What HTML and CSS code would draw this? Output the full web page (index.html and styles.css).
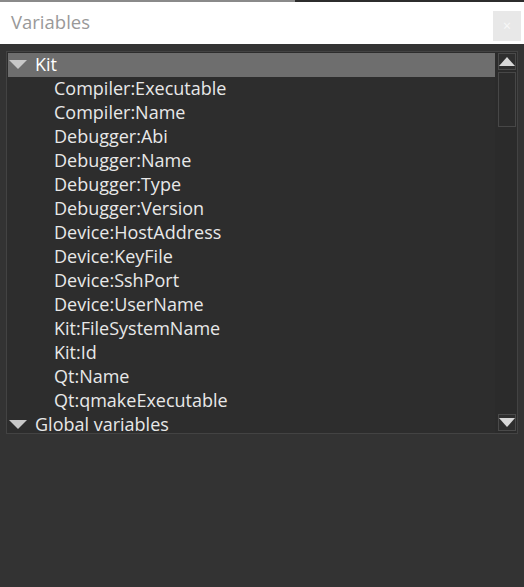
FILE: index.html
```html
<!DOCTYPE html>
<html>
<head>
<meta charset="utf-8">
<link rel="stylesheet" href="styles.css">
</head>
<body>
<div class="topstrip"><div class="strip-left"></div><div class="strip-right"></div></div>
<div class="titlebar">
  <span class="title">Variables</span>
  <div class="close">×</div>
</div>
<div class="content">
  <div class="tree">
    <div class="rows">
      <div class="row group selected"><span class="tri"></span><span>Kit</span></div>
      <div class="row child">Compiler:Executable</div>
      <div class="row child">Compiler:Name</div>
      <div class="row child">Debugger:Abi</div>
      <div class="row child">Debugger:Name</div>
      <div class="row child">Debugger:Type</div>
      <div class="row child">Debugger:Version</div>
      <div class="row child">Device:HostAddress</div>
      <div class="row child">Device:KeyFile</div>
      <div class="row child">Device:SshPort</div>
      <div class="row child">Device:UserName</div>
      <div class="row child">Kit:FileSystemName</div>
      <div class="row child">Kit:Id</div>
      <div class="row child">Qt:Name</div>
      <div class="row child">Qt:qmakeExecutable</div>
      <div class="row group last"><span class="tri"></span><span>Global variables</span></div>
    </div>
    <div class="scrollbar">
      <div class="sbtn up"><span class="arrow-up"></span></div>
      <div class="track"><div class="handle"></div></div>
      <div class="sbtn down"><span class="arrow-down"></span></div>
    </div>
  </div>
</div>
</body>
</html>
```

FILE: styles.css
```css
html, body {
  margin: 0;
  padding: 0;
  background: #333333;
  font-family: "Open Sans", "Noto Sans", sans-serif;
}
body {
  width: 524px;
  height: 587px;
  overflow: hidden;
}
.topstrip {
  display: flex;
  height: 2px;
}
.strip-left {
  width: 295px;
  background: #8a8a8a;
}
.strip-right {
  flex: 1;
  background: #2c2c2c;
}
.titlebar {
  height: 42px;
  background: #ffffff;
  display: flex;
  align-items: flex-start;
  padding-left: 11px;
  box-sizing: border-box;
}
.title {
  color: #999999;
  font-size: 18.5px;
  line-height: 20px;
  margin-top: 10px;
}
.close {
  margin-left: auto;
  margin-right: 3px;
  margin-top: 9px;
  width: 28px;
  height: 30px;
  background: #e8e8e8;
  color: #f8f8f8;
  font-size: 14px;
  line-height: 30px;
  text-align: center;
}
.content {
  padding: 7px 6px 0 6px;
}
.tree {
  display: flex;
  height: 383px;
  border: 1px solid #434343;
  background: #2d2d2d;
  box-sizing: border-box;
}
.rows {
  flex: 1;
  padding: 1px 0 0 1px;
}
.row {
  height: 24px;
  line-height: 20px;
  font-size: 18px;
  color: #e8e8e8;
  white-space: nowrap;
  display: flex;
  align-items: flex-start;
  padding-top: 1px;
  box-sizing: border-box;
}
.row.last {
  height: 20px;
}
.row.selected {
  background: #6e6e6e;
  color: #ffffff;
}
.row.child {
  padding-left: 46px;
}
.tri {
  width: 0;
  height: 0;
  border-left: 9px solid transparent;
  border-right: 9px solid transparent;
  border-top: 9px solid #c8c8c8;
  margin-left: 1px;
  margin-right: 8px;
  margin-top: 6px;
}
.scrollbar {
  width: 22px;
  display: flex;
  flex-direction: column;
  padding: 1px 1px 0 3px;
  box-sizing: border-box;
  background: #2b2b2b;
}
.sbtn {
  height: 17px;
  border: 1px solid #4a4a4a;
  background: #2e2e2e;
  box-sizing: border-box;
  display: flex;
  align-items: center;
  justify-content: center;
}
.arrow-up {
  width: 0;
  height: 0;
  border-left: 8px solid transparent;
  border-right: 8px solid transparent;
  border-bottom: 9px solid #d8d8d8;
}
.arrow-down {
  width: 0;
  height: 0;
  border-left: 8px solid transparent;
  border-right: 8px solid transparent;
  border-top: 9px solid #d8d8d8;
}
.track {
  flex: 1;
  padding-top: 2px;
  margin-bottom: 1px;
}
.handle {
  height: 55px;
  border: 1px solid #474747;
  background: #2c2c2c;
  box-sizing: border-box;
}
.sbtn.down {
  margin-bottom: 2px;
}
```
